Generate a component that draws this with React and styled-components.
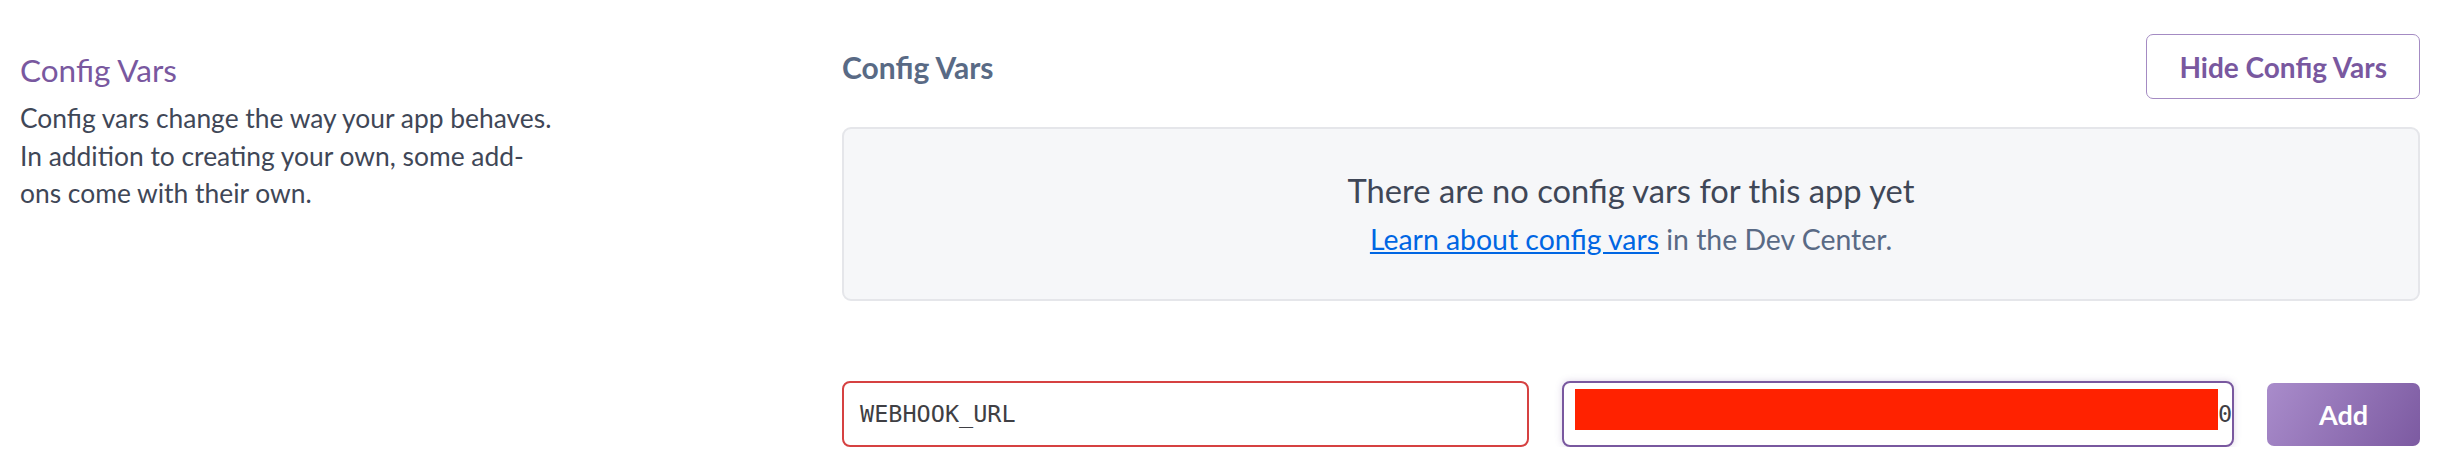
import React from "react"
import styled, { createGlobalStyle } from 'styled-components';

const Global = createGlobalStyle`
  body {
    margin: 0;
    background: #ffffff;
    font-family: 'Lato', 'Open Sans', sans-serif;
  }
`;

const Page = styled.div`
  display: grid;
  grid-template-columns: 822px minmax(0, 1fr);
  padding: 34px 39px 0 20px;
  width: 2459px;
  box-sizing: border-box;
`;

const Side = styled.div`
  padding-top: 16px;
`;

const SideTitle = styled.h2`
  margin: 0;
  font-size: 31.5px;
  line-height: 40px;
  font-weight: 400;
  color: #79589f;
`;

const SideText = styled.p`
  margin: 10px 0 0;
  width: 538px;
  font-size: 26.4px;
  line-height: 37.5px;
  color: #3f4757;
`;

const Main = styled.div`
  display: flex;
  flex-direction: column;
`;

const Header = styled.div`
  display: flex;
  justify-content: space-between;
  align-items: center;
  height: 65px;
`;

const Title = styled.h3`
  margin: 0;
  font-size: 30px;
  font-weight: 700;
  color: #596a85;
`;

const GhostButton = styled.button`
  height: 65px;
  padding: 0 32px;
  border: 1.5px solid #a48bc3;
  border-radius: 7px;
  background: #fff;
  color: #79589f;
  font-family: inherit;
  font-size: 28px;
  font-weight: 700;
`;

const Empty = styled.div`
  margin-top: 28px;
  height: 174px;
  box-sizing: border-box;
  border: 2px solid #e5e6ea;
  border-radius: 9px;
  background: #f6f7f9;
  display: flex;
  flex-direction: column;
  align-items: center;
  justify-content: center;
  gap: 10px;
`;

const EmptyTitle = styled.div`
  font-size: 32.7px;
  line-height: 40px;
  color: #3f4757;
`;

const EmptyNote = styled.div`
  font-size: 28.4px;
  line-height: 36px;
  color: #596a85;

  a {
    color: #0066e3;
    text-decoration: underline;
  }
`;

const Row = styled.div`
  margin-top: 80px;
  display: flex;
  align-items: center;
  gap: 33px;
`;

const Field = styled.div`
  height: 66px;
  box-sizing: border-box;
  border: 2px solid ${p => p.$tone === 'error' ? '#d64141' : '#79589f'};
  border-radius: 8px;
  background: #fff;
  display: flex;
  align-items: center;
  padding: ${p => p.$tone === 'focus' ? '0 1px 0 11px' : '0 16px'};
  flex: ${p => p.$grow};
  min-width: 0;
  overflow: hidden;
  white-space: nowrap;
  font-family: 'DejaVu Sans Mono', monospace;
  font-size: 23.5px;
  color: #3f3f44;
  box-shadow: ${p => p.$tone === 'focus' ? '0 0 7px rgba(121, 88, 159, 0.25)' : 'none'};
`;

const Redacted = styled.span`
  flex: none;
  align-self: flex-start;
  margin-top: 6px;
  width: 643px;
  height: 41px;
  background: #ff2200;
`;

const AddButton = styled.button`
  flex: none;
  width: 153px;
  height: 63px;
  border: none;
  border-radius: 7px;
  background: linear-gradient(120deg, #a98ccb, #7c5aa1);
  color: #fff;
  font-family: inherit;
  font-size: 27px;
  font-weight: 700;
`;

const App = () => (
  <>
    <Global />
    <Page>
      <Side>
        <SideTitle>Config Vars</SideTitle>
        <SideText>
          Config vars change the way your app behaves. In addition to creating your own, some add-ons come with their own.
        </SideText>
      </Side>
      <Main>
        <Header>
          <Title>Config Vars</Title>
          <GhostButton>Hide Config Vars</GhostButton>
        </Header>
        <Empty>
          <EmptyTitle>There are no config vars for this app yet</EmptyTitle>
          <EmptyNote>
            <a href="#">Learn about config vars</a> in the Dev Center.
          </EmptyNote>
        </Empty>
        <Row>
          <Field $tone="error" $grow="687 0 687px">WEBHOOK_URL</Field>
          <Field $tone="focus" $grow="672 0 672px">
            <Redacted />0
          </Field>
          <AddButton>Add</AddButton>
        </Row>
      </Main>
    </Page>
  </>
);

export default App
